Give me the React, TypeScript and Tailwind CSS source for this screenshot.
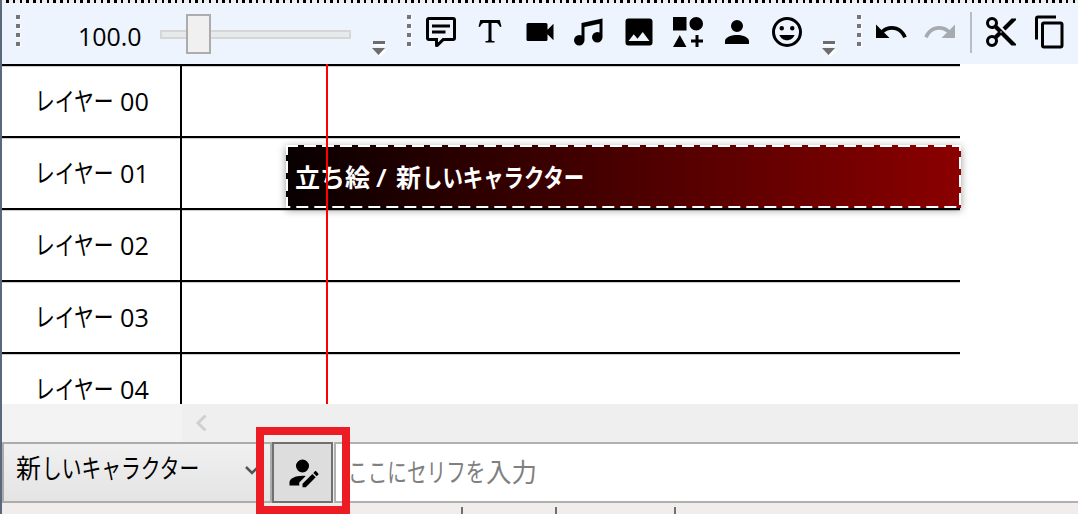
import React from "react";

const ICONS = {
  comment: "M9,22A1,1 0 0,1 8,21V18H4A2,2 0 0,1 2,16V4C2,2.89 2.9,2 4,2H20A2,2 0 0,1 22,4V16A2,2 0 0,1 20,18H13.9L10.2,21.71C10,21.9 9.75,22 9.5,22V22H9M10,16V19.08L13.08,16H20V4H4V16H10M6,7H18V9H6V7M6,11H15V13H6V11Z",
  text: "M18.5,4L19.66,8.35L18.7,8.61C18.25,7.74 17.79,6.87 17.26,6.43C16.73,6 16.11,6 15.5,6H13V16.5C13,17 13,17.5 13.33,17.75C13.67,18 14.33,18 15,18V19H9V18C9.67,18 10.33,18 10.67,17.75C11,17.5 11,17 11,16.5V6H8.5C7.89,6 7.27,6 6.74,6.43C6.21,6.87 5.75,7.74 5.3,8.61L4.34,8.35L5.5,4H18.5Z",
  video: "M17,10.5V7A1,1 0 0,0 16,6H4A1,1 0 0,0 3,7V17A1,1 0 0,0 4,18H16A1,1 0 0,0 17,17V13.5L21,17.5V6.5L17,10.5Z",
  music: "M21,3V15.5A3.5,3.5 0 0,1 17.5,19A3.5,3.5 0 0,1 14,15.5A3.5,3.5 0 0,1 17.5,12C18.04,12 18.55,12.12 19,12.34V6.47L9,8.6V17.5A3.5,3.5 0 0,1 5.5,21A3.5,3.5 0 0,1 2,17.5A3.5,3.5 0 0,1 5.5,14C6.04,14 6.55,14.12 7,14.34V6L21,3Z",
  image: "M8.5,13.5L11,16.5L14.5,12L19,18H5M21,19V5C21,3.89 20.1,3 19,3H5A2,2 0 0,0 3,5V19A2,2 0 0,0 5,21H19A2,2 0 0,0 21,19Z",
  shapes: "M2,2H11V11H2V2M17.5,2C20,2 22,4 22,6.5C22,9 20,11 17.5,11C15,11 13,9 13,6.5C13,4 15,2 17.5,2M6.5,14L11,22H2L6.5,14M19,17H22V19H19V22H17V19H14V17H17V14H19V17Z",
  account: "M12,4A4,4 0 0,1 16,8A4,4 0 0,1 12,12A4,4 0 0,1 8,8A4,4 0 0,1 12,4M12,14C16.42,14 20,15.79 20,18V20H4V18C4,15.79 7.58,14 12,14Z",
  face: "M12,17.5C14.33,17.5 16.3,16.04 17.11,14H6.89C7.69,16.04 9.67,17.5 12,17.5M8.5,11A1.5,1.5 0 0,0 10,9.5A1.5,1.5 0 0,0 8.5,8A1.5,1.5 0 0,0 7,9.5A1.5,1.5 0 0,0 8.5,11M15.5,11A1.5,1.5 0 0,0 17,9.5A1.5,1.5 0 0,0 15.5,8A1.5,1.5 0 0,0 14,9.5A1.5,1.5 0 0,0 15.5,11M12,20A8,8 0 0,1 4,12A8,8 0 0,1 12,4A8,8 0 0,1 20,12A8,8 0 0,1 12,20M12,2C6.47,2 2,6.5 2,12A10,10 0 0,0 12,22A10,10 0 0,0 22,12A10,10 0 0,0 12,2Z",
  undo: "M12.5,8C9.85,8 7.45,9 5.6,10.6L2,7V16H11L7.38,12.38C8.77,11.22 10.54,10.5 12.5,10.5C16.04,10.5 19.05,12.81 20.1,16L22.47,15.22C21.08,11.03 17.15,8 12.5,8Z",
  redo: "M18.4,10.6C16.55,9 14.15,8 11.5,8C6.85,8 2.92,11.03 1.54,15.22L3.9,16C4.95,12.81 7.95,10.5 11.5,10.5C13.45,10.5 15.23,11.22 16.62,12.38L13,16H22V7L18.4,10.6Z",
  cut: "M19,3L13,9L15,11L22,4V3M12,12.5A0.5,0.5 0 0,1 11.5,12A0.5,0.5 0 0,1 12,11.5A0.5,0.5 0 0,1 12.5,12A0.5,0.5 0 0,1 12,12.5M6,20A2,2 0 0,1 4,18C4,16.89 4.9,16 6,16A2,2 0 0,1 8,18C8,19.11 7.1,20 6,20M6,8A2,2 0 0,1 4,6C4,4.89 4.9,4 6,4A2,2 0 0,1 8,6C8,7.11 7.1,8 6,8M9.64,7.64C9.87,7.14 10,6.59 10,6A4,4 0 0,0 6,2A4,4 0 0,0 2,6A4,4 0 0,0 6,10C6.59,10 7.14,9.87 7.64,9.64L10,12L7.64,14.36C7.14,14.13 6.59,14 6,14A4,4 0 0,0 2,18A4,4 0 0,0 6,22A4,4 0 0,0 10,18C10,17.41 9.87,16.86 9.64,16.36L12,14L19,21H22V20L9.64,7.64Z",
  copy: "M19,21H8V7H19M19,5H8A2,2 0 0,0 6,7V21A2,2 0 0,0 8,23H19A2,2 0 0,0 21,21V7A2,2 0 0,0 19,5M16,1H4A2,2 0 0,0 2,3V17H4V3H16V1Z",
  accountEdit: "M21.7,13.35L20.7,14.35L18.65,12.3L19.65,11.3C19.86,11.09 20.21,11.09 20.42,11.3L21.7,12.58C21.91,12.79 21.91,13.14 21.7,13.35M12,18.94L18.06,12.88L20.11,14.93L14.06,21H12V18.94M12,14C7.58,14 4,15.79 4,18V20H10V18.11L14,14.11C13.34,14.03 12.67,14 12,14M12,4A4,4 0 0,0 8,8A4,4 0 0,0 12,12A4,4 0 0,0 16,8A4,4 0 0,0 12,4Z",
};

function Icon({ name, className = "size-9" }: { name: keyof typeof ICONS; className?: string }) {
  return (
    <svg viewBox="0 0 24 24" fill="currentColor" className={"shrink-0 " + className}>
      <path d={ICONS[name]} />
    </svg>
  );
}

function Grip({ className = "" }: { className?: string }) {
  return (
    <div className={"mt-[14px] flex shrink-0 flex-col gap-[5px] " + className}>
      {[0, 1, 2, 3].map((i) => (
        <i key={i} className="-mt-[2px] mb-[2px] size-1 bg-[#757575] shadow-[1px_1px_0_#fff]" />
      ))}
    </div>
  );
}

function Overflow({ className = "" }: { className?: string }) {
  return (
    <svg viewBox="0 0 15 17" className={"mt-[38px] h-[17px] w-[15px] shrink-0 " + className}>
      <path d="M2 2h12v3H2zM2 9h13l-6.500 7z" fill="#fff" />
      <path d="M1 0h12v3H1zM0 7h13l-6.500 7z" fill="#6d6d6d" />
    </svg>
  );
}

const LAYERS = ["00", "01", "02", "03", "04"];

function Layer({ id }: { id: string }) {
  return (
    <div className="flex h-[72px] w-[958px] shrink-0 border-t-2 border-black shadow-[inset_0_1px_0_#ccc]">
      <div className="flex w-[180px] shrink-0 items-start border-r-2 border-black pl-[33px] pt-[21px] text-[26px] leading-7">
        <span className="w-[85px] origin-left scale-x-[0.76] whitespace-nowrap">レイヤー</span>
        <span className="origin-left scale-x-[0.97]">{id}</span>
      </div>
    </div>
  );
}

export default function App() {
  return (
    <div className="relative flex h-[514px] w-[1078px] overflow-hidden bg-white font-['Open_Sans','Noto_Sans_CJK_JP',sans-serif] text-black">
      <div className="w-0.5 shrink-0 bg-[#5b677a]" />
      <div className="flex min-w-0 flex-1 flex-col">
        <div className="h-[3px] shrink-0 bg-[repeating-linear-gradient(90deg,#eee_0_4.250px,#000_4.250px_6.750px)]" />
        <header className="flex h-[61px] shrink-0 bg-[#edf4fd]">
          <Grip className="ml-3.5" />
          <span className="ml-[58px] mt-[15px] w-[66px] origin-left scale-x-[0.96] text-[26px] leading-9">100.0</span>
          <div className="relative ml-4 mt-[27px] h-[9px] w-[191px] shrink-0 border-2 border-[#d6d6d6] bg-[#e7eaea]">
            <div className="absolute -top-[18px] left-6 h-10 w-[25px] border-2 border-[#acacac] bg-[#f0f0f0]" />
          </div>
          <Overflow className="ml-[21px]" />
          <Grip className="ml-5" />
          <div className="ml-3 mt-[11px] flex gap-[13.400px]">
            <Icon name="comment" />
            <Icon name="text" />
            <Icon name="video" />
            <Icon name="music" />
            <Icon name="image" />
            <Icon name="shapes" />
            <Icon name="account" />
            <Icon name="face" />
          </div>
          <Overflow className="ml-[17.200px]" />
          <Grip className="ml-5" />
          <div className="ml-3 mt-[11px] flex gap-[13px]">
            <Icon name="undo" />
            <Icon name="redo" className="size-9 text-[#a7abb1]" />
          </div>
          <div className="ml-3 mt-[9px] h-[41px] w-0.5 shrink-0 bg-[#b9bec6]" />
          <div className="ml-[11px] mt-[11px] flex gap-[13px]">
            <Icon name="cut" />
            <Icon name="copy" />
          </div>
        </header>

        <main className="relative h-[340px] shrink-0 overflow-hidden">
          {LAYERS.map((id) => (
            <Layer key={id} id={id} />
          ))}
          <div className="absolute left-[284px] top-[81px] flex h-[63px] w-[675px] bg-[linear-gradient(90deg,#080000,#8b0000)] pl-[9px] pt-3.5 text-[25px] font-bold leading-9 text-white shadow-[0_2px_8px_#0006]">
            <svg className="absolute inset-0 h-full w-full" fill="none" stroke="#fff" strokeWidth="2" strokeDasharray="12 6">
              <path d="M0 1H675" />
              <path d="M0 62H675" strokeDashoffset="7.700" />
              <path d="M1 0V63" strokeDashoffset="2" />
              <path d="M674 0V63" strokeDashoffset="6" />
            </svg>
            <span className="w-[81px] shrink-0 whitespace-nowrap">立ち絵</span>
            <span className="w-5 shrink-0 origin-left scale-x-[1.1] font-semibold">/</span>
            <span className="w-[26px] shrink-0">新</span>
            <span className="origin-left scale-x-[0.815] whitespace-nowrap">しいキャラクター</span>
          </div>
          <div className="absolute left-[324px] top-0 h-full w-0.5 bg-[#f00]" />
        </main>

        <div className="flex h-[38px] shrink-0">
          <div className="w-[180px] bg-[#f3f3f3]" />
          <div className="flex-1 bg-[#efefef] pl-[13px] pt-[11px]">
            <svg viewBox="0 0 12 16" className="h-4 w-3" fill="none" stroke="#d0d0d0" strokeWidth="3">
              <path d="M10.500 0.500L3 8l7.500 7.500" />
            </svg>
          </div>
        </div>

        <div className="flex h-[61px] shrink-0 bg-[#f1eded]">
          <div className="flex w-[270px] shrink-0 border-2 border-[#acacac] bg-linear-to-b from-[#f0f0f0] to-[#e4e4e4] pl-3 pt-1.5 text-[26px] leading-9">
            <span className="w-[26px] shrink-0 origin-left scale-x-[0.96]">新</span>
            <span className="w-[203px] shrink-0 origin-left scale-x-[0.76] whitespace-nowrap">しいキャラクター</span>
            <svg viewBox="0 0 14 10" className="mt-4 h-2.5 w-3.5 shrink-0" fill="none" stroke="#555" strokeWidth="2.500">
              <path d="M1 1l6 6 6-6" />
            </svg>
          </div>
          <button className="flex w-[61px] shrink-0 items-center justify-center border-2 border-[#707070] bg-[#ddd]">
            <Icon name="accountEdit" className="size-[39px]" />
          </button>
          <div className="ml-px flex flex-1 border-2 border-r-0 border-[#b0b0b0] bg-white pl-3 pt-2.5 text-[26px] leading-9 text-[#808080]">
            <span className="w-[138px] shrink-0 origin-left scale-x-[0.755] whitespace-nowrap">ここにセリフを</span>
            <span className="origin-left scale-x-[0.98] whitespace-nowrap">入力</span>
          </div>
        </div>

        <footer className="flex h-[11px] shrink-0 bg-[#f1eded] pt-1">
          <div className="w-[461px] border-r-2 border-[#707070]" />
          <div className="w-[94px] border-r-2 border-[#707070]" />
          <div className="w-[119px] border-r-2 border-[#707070]" />
        </footer>
      </div>
      <div className="absolute left-64 top-[427px] h-[87px] w-[94px] border-8 border-[#ed1c24]" />
    </div>
  );
}
